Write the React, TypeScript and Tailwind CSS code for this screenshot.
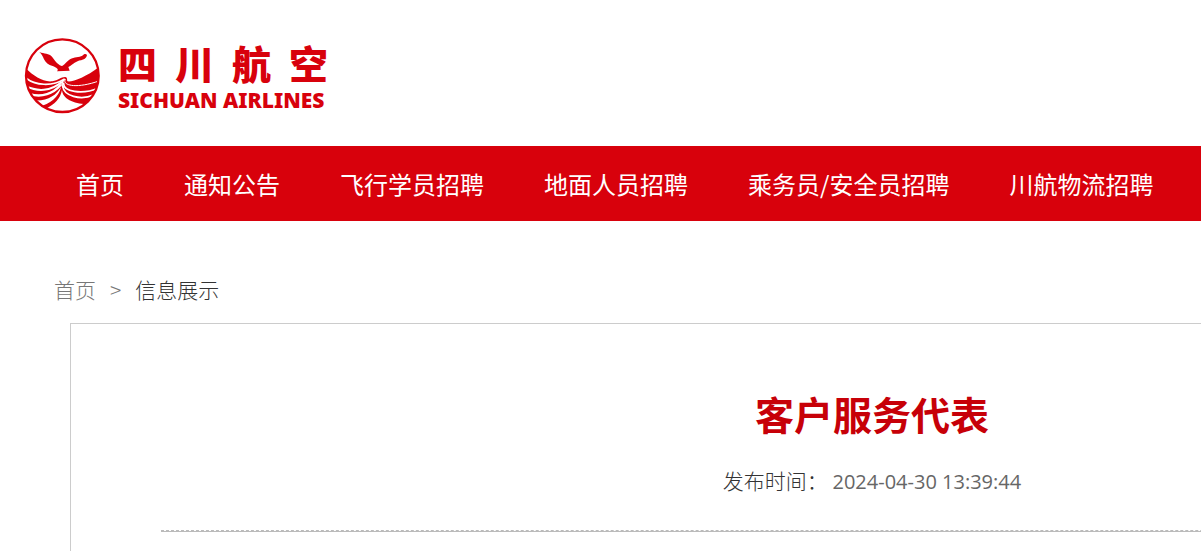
import React from 'react';

const navItems = [
  '首页',
  '通知公告',
  '飞行学员招聘',
  '地面人员招聘',
  '乘务员/安全员招聘',
  '川航物流招聘',
];

const Emblem = () => (
  <svg viewBox="27 21 234 234" className="h-[78px] w-[78px] shrink-0" aria-hidden="true">
    <clipPath id="disc">
      <circle cx="142" cy="137" r="109" />
    </clipPath>
    {/* gull */}
    <path
      fill="#d8010c"
      d="M73 66 C88 72 102 70 111 80 C119 89 124 101 140 108 C148 107 154 95 165 88 C178 80 192 83 202 77 C207 71 213 70 216 75 C214 86 206 88 198 91 C182 93 176 103 160 111 L164 122 L126 124 C133 117 124 113 113 108 C100 105 92 98 87 88 C83 78 80 72 73 66 Z"
    />
    {/* waves */}
    <g clipPath="url(#disc)">
      <path
        fill="#d8010c"
        d="M28 112 C52 134 82 158 112 154 C130 151 138 141 150 141 C160 143 154 151 158 154 C176 156 218 138 258 106 L258 255 L28 255 Z"
      />
      <g fill="none" stroke="#fff" strokeLinecap="round">
        <path strokeWidth="5" d="M30 142 C60 168 112 170 149 147 C140 156 139 164 144 171" />
        <path strokeWidth="6" d="M32 168 C66 186 108 184 139 157" />
        <path strokeWidth="7" d="M44 192 C80 204 116 190 136 166" />
        <path strokeWidth="3" d="M151 149 C140 162 174 180 252 153" />
        <path strokeWidth="5" d="M146 160 C144 184 200 196 250 174" />
        <path strokeWidth="5" d="M143 168 C146 198 196 212 236 195" />
      </g>
      <g fill="#fff">
        <path d="M56 211 C98 214 124 196 138 171 C132 202 104 222 72 230 Z" />
        <path d="M141 180 C142 206 176 222 214 222 C180 250 128 252 90 238 C120 222 136 206 141 180 Z" />
      </g>
    </g>
    <circle cx="142" cy="137" r="109" fill="none" stroke="#d8010c" strokeWidth="7" />
  </svg>
);

const page = () => {
  return (
    <div className="overflow-hidden bg-white font-['Noto_Sans_CJK_SC',sans-serif]">
      <header className="flex h-[146px] items-start px-6 pt-[37px]">
        <a href="#" className="flex items-start text-[#d8010c]">
          <Emblem />
          <div className="ml-4">
            <div className="flex gap-[18px] text-[39px] leading-[50px] font-black">
              <span>四</span>
              <span>川</span>
              <span>航</span>
              <span>空</span>
            </div>
            <div className="font-['Noto_Sans',sans-serif] text-[21px] leading-[26px] font-black">
              SICHUAN AIRLINES
            </div>
          </div>
        </a>
      </header>

      <nav className="bg-[#d8010c] px-[76px]">
        <ul className="flex gap-[60px]">
          {navItems.map((item) => (
            <li key={item} className="shrink-0">
              <a href="#" className="block text-2xl leading-[75px] whitespace-nowrap text-white">
                {item}
              </a>
            </li>
          ))}
        </ul>
      </nav>

      <main className="min-w-[1744px] px-[70px] pt-[53px]">
        <div className="-ml-4 flex gap-[14px] text-[21px] leading-[30px] font-light text-[#333]">
          <a href="#" className="text-[#777]">
            首页
          </a>
          <span className="text-[#777]">&gt;</span>
          <span>信息展示</span>
        </div>

        <article className="mt-[19px] border border-b-0 border-[#ccc] px-[90px] pt-[59px] pb-[20px] text-center">
          <h1 className="text-[39px] leading-[60px] font-bold text-[#c70008]">客户服务代表</h1>
          <p className="mt-[22px] text-[21px] leading-[30px] font-light text-[#333]">
            发布时间：{' '}
            <time className="font-['Open_Sans',sans-serif] text-xl font-normal text-[#666]">
              2024-04-30 13:39:44
            </time>
          </p>
          <hr className="mt-[34px] border-t border-b border-[#bbb] [border-top-style:dashed]" />
        </article>
      </main>
    </div>
  );
};

export default page;
